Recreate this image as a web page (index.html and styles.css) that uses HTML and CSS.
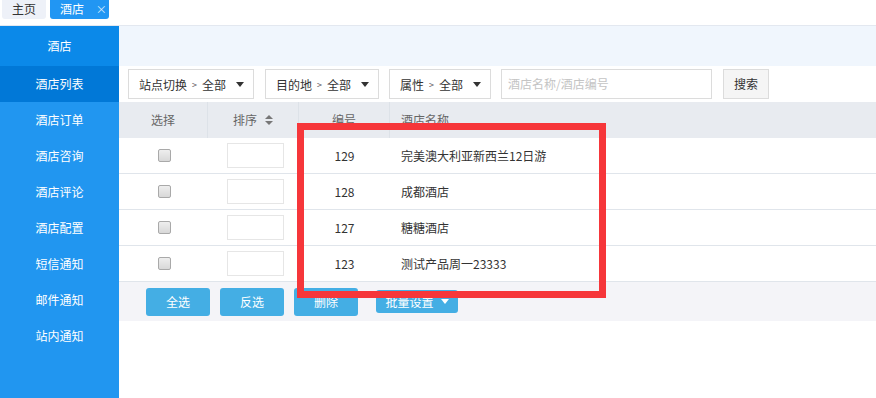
FILE: index.html
```html
<!DOCTYPE html>
<html lang="zh-CN">
<head>
  <meta charset="UTF-8" />
  <title>酒店列表</title>
  <link rel="stylesheet" href="styles.css">
</head>
<body>
  <div class="tabs">
    <div class="tab">主页</div>
    <div class="tab active">酒店 <span class="close">×</span></div>
  </div>
  <div class="layout">
    <aside class="sidebar">
      <div class="side-title">酒店</div>
      <div class="side-item current">酒店列表</div>
      <div class="side-item">酒店订单</div>
      <div class="side-item">酒店咨询</div>
      <div class="side-item">酒店评论</div>
      <div class="side-item">酒店配置</div>
      <div class="side-item">短信通知</div>
      <div class="side-item">邮件通知</div>
      <div class="side-item">站内通知</div>
    </aside>
    <main class="content">
      <div class="strip"></div>
      <div class="filters">
        <div class="select s1">站点切换 <span class="gt">&gt;</span> 全部 <span class="caret"></span></div>
        <div class="select s2">目的地 <span class="gt">&gt;</span> 全部 <span class="caret"></span></div>
        <div class="select s3">属性 <span class="gt">&gt;</span> 全部 <span class="caret"></span></div>
        <div class="search">酒店名称/酒店编号</div>
        <div class="search-btn">搜索</div>
      </div>
      <div class="row head">
        <div class="c-sel">选择</div>
        <div class="c-sort">排序 <span class="sort-ico"><i class="up"></i><i class="down"></i></span></div>
        <div class="c-id">编号</div>
        <div class="c-name">酒店名称</div>
      </div>
      <div class="row">
        <div class="c-sel"><span class="check"></span></div>
        <div class="c-sort"><span class="order"></span></div>
        <div class="c-id">129</div>
        <div class="c-name">完美澳大利亚新西兰12日游</div>
      </div>
      <div class="row">
        <div class="c-sel"><span class="check"></span></div>
        <div class="c-sort"><span class="order"></span></div>
        <div class="c-id">128</div>
        <div class="c-name">成都酒店</div>
      </div>
      <div class="row">
        <div class="c-sel"><span class="check"></span></div>
        <div class="c-sort"><span class="order"></span></div>
        <div class="c-id">127</div>
        <div class="c-name">糖糖酒店</div>
      </div>
      <div class="row">
        <div class="c-sel"><span class="check"></span></div>
        <div class="c-sort"><span class="order"></span></div>
        <div class="c-id">123</div>
        <div class="c-name">测试产品周一23333</div>
      </div>
      <div class="actions">
        <div class="btn">全选</div>
        <div class="btn">反选</div>
        <div class="btn">删除</div>
        <div class="btn batch">批量设置 <span class="caret white"></span></div>
      </div>
      <div class="highlight"></div>
    </main>
  </div>
</body>
</html>
```

FILE: styles.css
```css
body {
  margin: 0;
  font-family: "Noto Sans CJK SC", "Liberation Sans", sans-serif;
  font-size: 12px;
  color: #333;
  background: #fff;
  width: 876px;
  height: 398px;
  overflow: hidden;
}
.tabs {
  height: 25px;
  border-bottom: 1px solid #e3e8f0;
  display: flex;
  gap: 4px;
  padding-left: 2px;
}
.tab {
  width: 44px;
  height: 19px;
  line-height: 18px;
  text-align: center;
  background: #eef1f8;
  color: #333;
  border-radius: 0 0 3px 3px;
  white-space: nowrap;
}
.tab.active {
  background: #2196f3;
  color: #fff;
  width: 59px;
  text-align: left;
  box-sizing: border-box;
  padding-left: 10px;
}
.tab .close {
  font-size: 11px;
  margin-left: 9px;
  color: #d6eafc;
}
.layout {
  display: flex;
  height: 372px;
}
.sidebar {
  width: 119px;
  background: #2196f0;
  color: #fff;
  flex: none;
}
.side-title {
  height: 40px;
  line-height: 40px;
  text-align: center;
  background: #0b89e9;
}
.side-item {
  height: 36px;
  line-height: 36px;
  text-align: center;
}
.side-item.current {
  background: #0178d7;
}
.content {
  flex: 1;
  position: relative;
}
.strip {
  height: 40px;
  background: #f0f6fd;
}
.filters {
  height: 36px;
  display: flex;
  align-items: center;
  padding-left: 9px;
  gap: 10px;
}
.select {
  height: 30px;
  box-sizing: border-box;
  border: 1px solid #dcdcdc;
  padding: 0 10px;
  color: #333;
  display: flex;
  align-items: center;
  gap: 5px;
  white-space: nowrap;
  flex: none;
}
.s1 { width: 126px; }
.s2 { width: 114px; margin-left: 1px; }
.s3 { width: 102px; }
.gt {
  font-size: 9px;
  color: #555;
}
.caret {
  width: 0;
  height: 0;
  border-left: 4px solid transparent;
  border-right: 4px solid transparent;
  border-top: 5px solid #333;
  margin-left: 5px;
}
.caret.white {
  border-top-color: #fff;
}
.search {
  width: 211px;
  height: 30px;
  box-sizing: border-box;
  line-height: 28px;
  border: 1px solid #dcdcdc;
  padding-left: 6px;
  color: #c4c4c4;
  flex: none;
}
.search-btn {
  height: 30px;
  box-sizing: border-box;
  line-height: 28px;
  width: 46px;
  margin-left: 1px;
  text-align: center;
  border: 1px solid #dcdcdc;
  background: #f5f5f5;
  color: #333;
  flex: none;
}
.row {
  display: flex;
  height: 35px;
  line-height: 35px;
  border-bottom: 1px solid #e0e5eb;
}
.row.head {
  height: 36px;
  line-height: 36px;
  background: #e8ebf0;
  color: #666;
  border-bottom: none;
}
.c-sel { width: 89px; }
.c-sort { width: 91px; }
.c-id { width: 91px; }
.c-name { flex: 1; padding-left: 11px; }
.head .c-sel, .head .c-sort, .head .c-id {
  border-right: 1px solid #dde2e8;
  box-sizing: border-box;
}
.c-sel, .c-sort, .c-id {
  display: flex;
  align-items: center;
  justify-content: center;
}
.sort-ico {
  display: inline-flex;
  flex-direction: column;
  gap: 2px;
  margin-left: 8px;
}
.sort-ico i {
  width: 0;
  height: 0;
  border-left: 4px solid transparent;
  border-right: 4px solid transparent;
}
.sort-ico .up { border-bottom: 4px solid #777; }
.sort-ico .down { border-top: 4px solid #777; }
.check {
  width: 11px;
  height: 11px;
  border: 1px solid #a9a9a9;
  border-radius: 2px;
  background: linear-gradient(#eee, #d8d8d8);
  margin-left: 1px;
}
.order {
  width: 55px;
  height: 23px;
  border: 1px solid #e6e6e6;
  margin-left: 3px;
}
.actions {
  height: 39px;
  background: #f4f4f8;
  display: flex;
  align-items: center;
  padding-left: 27px;
  gap: 10px;
}
.btn {
  width: 64px;
  height: 28px;
  line-height: 28px;
  text-align: center;
  background: #44aee4;
  color: #fff;
  border-radius: 3px;
}
.btn.batch {
  width: 82px;
  height: 23px;
  line-height: 23px;
  margin-left: 8px;
  display: flex;
  align-items: center;
  justify-content: center;
  gap: 2px;
}
.highlight {
  position: absolute;
  left: 178px;
  top: 97px;
  width: 295px;
  height: 161px;
  border: 7px solid #f6363a;
}
```
